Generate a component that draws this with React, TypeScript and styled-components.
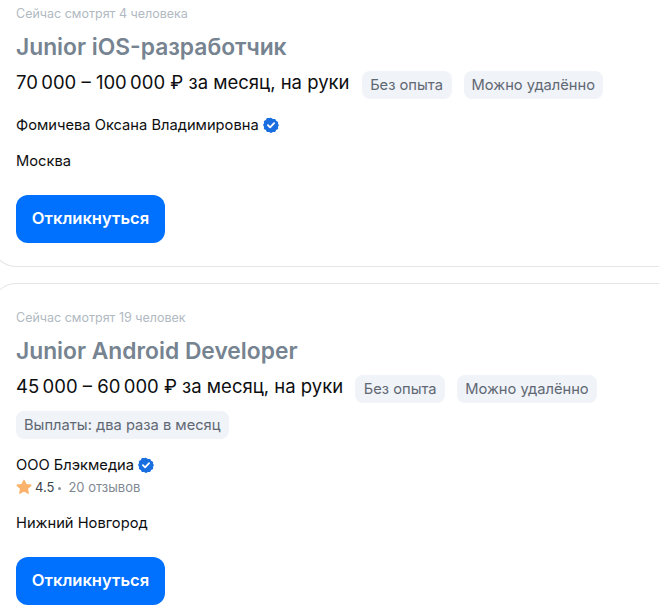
import React from 'react';
import styled, {createGlobalStyle} from 'styled-components';

const GlobalStyle = createGlobalStyle`
    html, body {
        margin: 0;
        padding: 0;
        background: #fff;
    }
    body {
        width: 659px;
        height: 613px;
        overflow: hidden;
        font-family: "Inter", "Liberation Sans", sans-serif;
    }
`

const vacancies = [
    {
        watching: "Сейчас смотрят 4 человека",
        title: "Junior iOS-разработчик",
        salary: "70\u2009000 – 100\u2009000 ₽ за месяц, на руки",
        tags: ["Без опыта", "Можно удалённо"],
        company: "Фомичева Оксана Владимировна",
        city: "Москва",
    },
    {
        watching: "Сейчас смотрят 19 человек",
        title: "Junior Android Developer",
        salary: "45\u2009000 – 60\u2009000 ₽ за месяц, на руки",
        tags: ["Без опыта", "Можно удалённо"],
        extraTag: "Выплаты: два раза в месяц",
        company: "ООО Блэкмедиа",
        rating: "4.5",
        reviews: "20 отзывов",
        city: "Нижний Новгород",
    },
]

const VerifiedIcon = () => (
    <BadgeSvg viewBox="0 0 16 16">
        <path
            fill="#1a6fe0"
            d="M8 0l2.100 1.300 2.500-.100 1.100 2.200 2.200 1.200-.100 2.400L16.900 8l-1.100 2 .100 2.400-2.200 1.200-1.100 2.200-2.500-.100L8 17l-2.100-1.300-2.500.100-1.100-2.200L.100 12.400.200 10-.900 8 .200 6 .100 3.600l2.200-1.200 1.100-2.200 2.500.100z"
            transform="translate(.8 .8) scale(.9)"
        />
        <path d="M4.900 8.200l2.200 2.200 4-4.200" fill="none" stroke="#fff" strokeWidth="1.800" strokeLinecap="round" strokeLinejoin="round"/>
    </BadgeSvg>
)

const StarIcon = () => (
    <StarSvg viewBox="0 0 16 16">
        <path
            fill="#fbb26b"
            stroke="#fbb26b"
            strokeWidth="1.200"
            strokeLinejoin="round"
            d="M8 1.200l2.100 4.400 4.900.6-3.600 3.300.9 4.800L8 12l-4.300 2.300.9-4.800L1 6.200l4.900-.6z"
        />
    </StarSvg>
)

export default function App() {
    return (
        <Page>
            <GlobalStyle/>
            {vacancies.map((v, i) => (
                <Card key={v.title} $first={i === 0}>
                    <Watching>{v.watching}</Watching>
                    <Title>{v.title}</Title>
                    <SalaryRow>
                        <Salary>{v.salary}</Salary>
                        {v.tags.map(t => <Tag key={t}>{t}</Tag>)}
                        {v.extraTag && <Tag>{v.extraTag}</Tag>}
                    </SalaryRow>
                    <Company>
                        {v.company}
                        <VerifiedIcon/>
                    </Company>
                    {v.rating && (
                        <Rating>
                            <StarIcon/>
                            <Score>{v.rating}</Score>
                            <Dot/>
                            <Reviews>{v.reviews}</Reviews>
                        </Rating>
                    )}
                    <City>{v.city}</City>
                    <Respond>Откликнуться</Respond>
                </Card>
            ))}
        </Page>
    );
}

const Page = styled.div`
    display: flex;
    flex-direction: column;
    gap: 16px;
    width: 659px;
    height: 613px;
    overflow: hidden;
`

const Card = styled.div<{ $first?: boolean }>`
    box-sizing: border-box;
    width: 700px;
    flex-shrink: 0;
    margin-left: -8px;
    padding: ${props => props.$first ? "6px" : "26px"} 23px 23px;
    border: 1px solid #e3e5e8;
    border-radius: ${props => props.$first ? "0 0 24px 24px" : "24px"};
    border-top-width: ${props => props.$first ? "0" : "1px"};
`

const Watching = styled.div`
    font-size: 12.5px;
    line-height: 16px;
    color: #b1b9c2;
`

const Title = styled.h2`
    margin: 7px 0 0;
    font-size: 22.8px;
    line-height: 36px;
    font-weight: 600;
    color: #768390;
`

const SalaryRow = styled.div`
    display: flex;
    flex-wrap: wrap;
    align-items: flex-start;
    gap: 8px 12px;
    width: 620px;
    margin-top: 6px;
`

const Salary = styled.div`
    font-size: 18.5px;
    line-height: 22px;
    color: #0d0e10;
`

const Tag = styled.span`
    box-sizing: border-box;
    min-width: 90px;
    padding: 0 8px;
    height: 28px;
    display: inline-flex;
    align-items: center;
    justify-content: center;
    border-radius: 8px;
    background: #f0f3f8;
    font-size: 14.7px;
    color: #5f6873;
`

const Company = styled.div`
    display: flex;
    align-items: center;
    gap: 4px;
    margin-top: 16px;
    font-size: 14.7px;
    line-height: 20px;
    color: #0d0e10;
`

const BadgeSvg = styled.svg`
    width: 16px;
    height: 16px;
    flex-shrink: 0;
`

const Rating = styled.div`
    display: flex;
    align-items: center;
    height: 20px;
    margin-top: 2px;
    font-size: 13px;
`

const StarSvg = styled.svg`
    width: 16px;
    height: 16px;
    margin-right: 3px;
`

const Score = styled.span`
    color: #3c434b;
`

const Dot = styled.span`
    width: 3px;
    height: 3px;
    margin: 2px 7px 0 4px;
    border-radius: 50%;
    background: #8a939d;
`

const Reviews = styled.span`
    color: #7f8994;
`

const City = styled.div`
    margin-top: 16px;
    font-size: 14.7px;
    line-height: 20px;
    color: #0d0e10;
`

const Respond = styled.button`
    display: block;
    margin-top: 24px;
    width: 149px;
    height: 48px;
    padding: 0 0 2px;
    border: none;
    border-radius: 12px;
    background: #0070ff;
    color: #fff;
    font-family: inherit;
    font-size: 16.6px;
    font-weight: 600;
`
